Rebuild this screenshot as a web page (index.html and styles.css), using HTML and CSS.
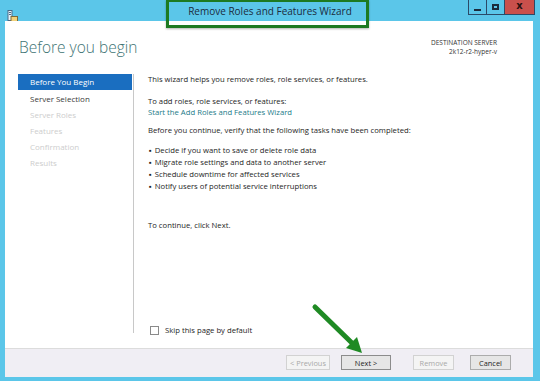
FILE: index.html
```html
<!DOCTYPE html>
<html lang="en">
<head>
    <meta charset="UTF-8">
    <title>Remove Roles and Features Wizard</title>
    <link rel="stylesheet" href="styles.css">
</head>
<body>
    <div class="window">
        <div class="titlebar">
            <div class="app-icon">
                <svg width="11" height="12" viewBox="0 0 11 12">
                    <rect x="1" y="0.5" width="4" height="10" fill="#e8f4fa" stroke="#4a6a8a" stroke-width="1"/>
                    <rect x="2" y="2" width="2" height="1" fill="#4a6a8a"/>
                    <rect x="2" y="4" width="2" height="1" fill="#4a6a8a"/>
                    <rect x="4" y="6.5" width="6.5" height="5" fill="#f2d27a" stroke="#7a6a3a" stroke-width="1"/>
                </svg>
            </div>
            <div class="title">Remove Roles and Features Wizard</div>
            <div class="controls">
                <span class="ctl ctl-min"><i></i></span>
                <span class="ctl ctl-max"><i></i></span>
                <span class="ctl ctl-close">x</span>
            </div>
        </div>

        <div class="client">
            <div class="header">
                <h1>Before you begin</h1>
                <div class="dest">
                    <div class="dest-label">DESTINATION SERVER</div>
                    <div>2k12-r2-hyper-v</div>
                </div>
            </div>

            <div class="main">
                <ul class="steps">
                    <li class="active">Before You Begin</li>
                    <li class="enabled">Server Selection</li>
                    <li>Server Roles</li>
                    <li>Features</li>
                    <li>Confirmation</li>
                    <li>Results</li>
                </ul>
                <div class="content">
                    <p class="intro">This wizard helps you remove roles, role services, or features.</p>
                    <p class="add">To add roles, role services, or features:<br>
                        <a href="#" class="link">Start the Add Roles and Features Wizard</a></p>
                    <p class="verify">Before you continue, verify that the following tasks have been completed:</p>
                    <ul class="tasks">
                        <li>Decide if you want to save or delete role data</li>
                        <li>Migrate role settings and data to another server</li>
                        <li>Schedule downtime for affected services</li>
                        <li>Notify users of potential service interruptions</li>
                    </ul>
                    <p class="next-hint">To continue, click Next.</p>
                    <label class="skip"><span class="box"></span>Skip this page by default</label>
                </div>
            </div>

            <div class="footer">
                <button class="btn btn-prev" disabled>&lt; Previous</button>
                <button class="btn btn-next">Next &gt;</button>
                <button class="btn btn-remove" disabled>Remove</button>
                <button class="btn btn-cancel">Cancel</button>
            </div>
        </div>

        <!-- annotations drawn over the screenshot -->
        <div class="mark-title"></div>
        <svg class="mark-arrow" width="70" height="60" viewBox="0 0 70 60">
            <line x1="6" y1="5" x2="44" y2="42" stroke="#1f8a24" stroke-width="5" stroke-linecap="round"/>
            <polygon points="53,51 37,46 48,35" fill="#1f8a24"/>
        </svg>
    </div>
</body>
</html>
```

FILE: styles.css
```css
* {
    margin: 0;
    padding: 0;
    box-sizing: border-box;
}

body {
    width: 540px;
    height: 381px;
    overflow: hidden;
    font-family: "Open Sans", "Noto Sans", sans-serif;
    color: #1e1e1e;
}

.window {
    position: relative;
    height: 381px;
    background: #5bc6e9;
    display: flex;
    flex-direction: column;
}

.titlebar {
    height: 21px;
    display: grid;
    grid-template-columns: 1fr auto 1fr;
    align-items: start;
}

.app-icon {
    padding: 5px 0 0 7px;
}

.title {
    font-size: 10px;
    color: #1b2b3c;
    padding-top: 4px;
}

.controls {
    display: flex;
    justify-content: flex-end;
    padding-right: 5px;
}

.ctl {
    height: 15px;
    width: 19px;
    border: 1px solid #2b4a68;
    border-top: none;
    display: flex;
    align-items: center;
    justify-content: center;
}

.ctl + .ctl {
    border-left: none;
}

.ctl-min i {
    width: 7px;
    height: 2px;
    background: #1b2b3c;
    margin-top: 5px;
}

.ctl-max {
    width: 18px;
}

.ctl-max i {
    width: 7px;
    height: 6px;
    border: 2px solid #1b2b3c;
}

.ctl-close {
    width: 30px;
    background: #c9504c;
    color: #2a1010;
    font: bold 10px "DejaVu Sans", sans-serif;
    line-height: 1;
    padding-bottom: 2px;
}

.client {
    flex: 1;
    margin: 0 7px 4px 5px;
    background: #fff;
    display: flex;
    flex-direction: column;
}

.header {
    height: 53px;
    display: flex;
    justify-content: space-between;
    padding: 16px 36px 0 14px;
}

h1 {
    font-size: 15.5px;
    font-weight: 300;
    color: #3d7373;
    line-height: 20px;
}

.dest {
    font-size: 6.5px;
    text-align: right;
    color: #333;
    line-height: 9px;
    padding-top: 1px;
}

.main {
    flex: 1;
    display: flex;
    padding: 0 0 12px 13px;
}

.steps {
    list-style: none;
    width: 116px;
    margin-bottom: 3px;
    border-right: 1px solid #c8c8c8;
    font-size: 8px;
}

.steps li {
    height: 16px;
    line-height: 17px;
    padding-left: 12px;
    color: #cdcdcd;
}

.steps li.active {
    background: #1a6ec0;
    color: #fff;
    margin-right: 1px;
    line-height: 16px;
}

.steps li.enabled {
    color: #3a3a3a;
}

.content {
    flex: 1;
    display: flex;
    flex-direction: column;
    padding: 0 0 0 14px;
    font-size: 7.7px;
    line-height: 11px;
}

.intro {
    padding-top: 0;
    margin-bottom: 11px;
}

.add {
    margin-bottom: 7px;
}

.verify {
    margin-bottom: 8px;
}

.link {
    color: #1c7b89;
    text-decoration: none;
}

.tasks {
    list-style: none;
    line-height: 12px;
}

.tasks li::before {
    content: "\25AA";
    margin: 0 3px 0 1px;
}

.next-hint {
    margin-top: 28px;
}

.skip {
    margin-top: auto;
    display: flex;
    align-items: center;
    gap: 6px;
    padding-left: 2px;
}

.skip .box {
    width: 9px;
    height: 9px;
    border: 1px solid #8a8a8a;
    background: #fff;
}

.footer {
    height: 29px;
    background: #f0eef4;
    border-top: 1px solid #dcdcdc;
    display: flex;
    justify-content: flex-end;
    align-items: flex-start;
    padding: 6px 22px 0 0;
}

.btn {
    height: 15px;
    font-family: inherit;
    font-size: 7.4px;
    color: #1e1e1e;
    background: #e6e6e6;
    border: 1px solid #acacac;
}

.btn:disabled {
    color: #a8a8a8;
    background: #f4f4f4;
    border-color: #d2d2d2;
}

.btn-prev {
    width: 44px;
}

.btn-next {
    width: 50px;
    margin-left: 11px;
    border-color: #8c8c8c;
}

.btn-remove {
    width: 41px;
    margin-left: 22px;
}

.btn-cancel {
    width: 41px;
    margin-left: 16px;
}

.mark-title {
    position: absolute;
    left: 166px;
    top: 0;
    width: 203px;
    height: 28px;
    border: 3px solid #1d7a22;
    border-top-width: 2px;
    box-shadow: 0 1px 2px rgba(0, 0, 0, 0.3);
}

.mark-arrow {
    position: absolute;
    left: 309px;
    top: 302px;
}
```
